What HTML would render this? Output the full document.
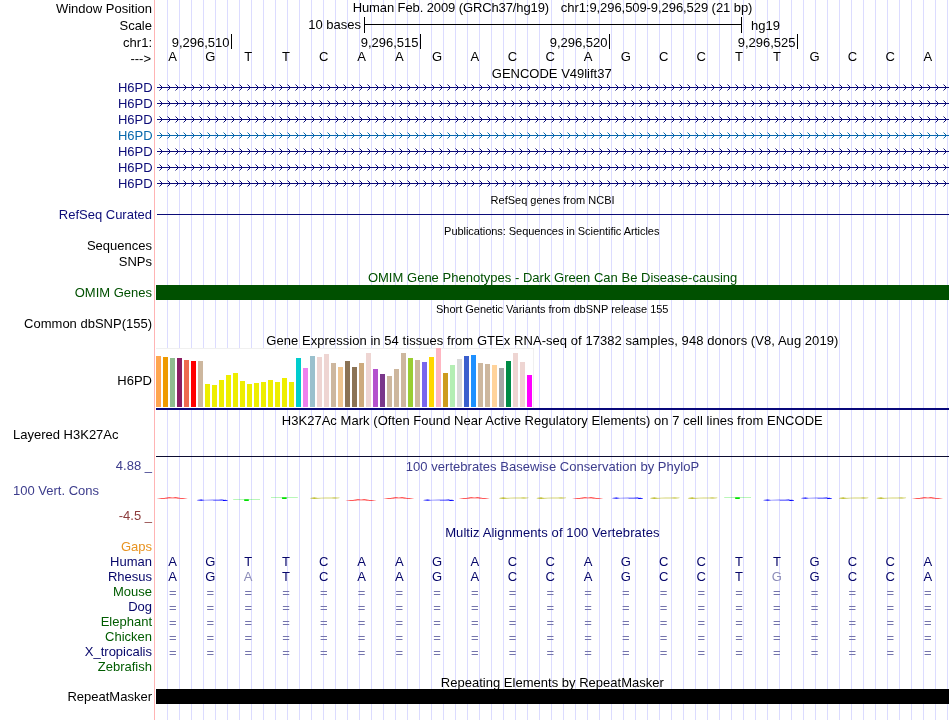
<!DOCTYPE html><html><head><meta charset="utf-8"><title>UCSC Genome Browser</title><style>
html,body{margin:0;padding:0;background:#fff;}
body{width:950px;height:720px;overflow:hidden;}
svg{display:block;font-family:"Liberation Sans",sans-serif;will-change:transform;}
text{font-size:13px;}
.r{text-anchor:end}.c{text-anchor:middle}.s{font-size:11px}
.g{shape-rendering:crispEdges}
</style></head><body>
<svg width="950" height="720" viewBox="0 0 950 720">
<rect width="950" height="720" fill="#fff"/>
<g class="g" fill="#dcdcff">
<rect x="167" y="0" width="1" height="720"/>
<rect x="179" y="0" width="1" height="720"/>
<rect x="191" y="0" width="1" height="720"/>
<rect x="203" y="0" width="1" height="720"/>
<rect x="215" y="0" width="1" height="720"/>
<rect x="227" y="0" width="1" height="720"/>
<rect x="239" y="0" width="1" height="720"/>
<rect x="251" y="0" width="1" height="720"/>
<rect x="263" y="0" width="1" height="720"/>
<rect x="275" y="0" width="1" height="720"/>
<rect x="287" y="0" width="1" height="720"/>
<rect x="299" y="0" width="1" height="720"/>
<rect x="311" y="0" width="1" height="720"/>
<rect x="323" y="0" width="1" height="720"/>
<rect x="335" y="0" width="1" height="720"/>
<rect x="347" y="0" width="1" height="720"/>
<rect x="359" y="0" width="1" height="720"/>
<rect x="371" y="0" width="1" height="720"/>
<rect x="383" y="0" width="1" height="720"/>
<rect x="395" y="0" width="1" height="720"/>
<rect x="407" y="0" width="1" height="720"/>
<rect x="419" y="0" width="1" height="720"/>
<rect x="431" y="0" width="1" height="720"/>
<rect x="443" y="0" width="1" height="720"/>
<rect x="455" y="0" width="1" height="720"/>
<rect x="467" y="0" width="1" height="720"/>
<rect x="479" y="0" width="1" height="720"/>
<rect x="491" y="0" width="1" height="720"/>
<rect x="503" y="0" width="1" height="720"/>
<rect x="515" y="0" width="1" height="720"/>
<rect x="527" y="0" width="1" height="720"/>
<rect x="539" y="0" width="1" height="720"/>
<rect x="551" y="0" width="1" height="720"/>
<rect x="563" y="0" width="1" height="720"/>
<rect x="575" y="0" width="1" height="720"/>
<rect x="587" y="0" width="1" height="720"/>
<rect x="599" y="0" width="1" height="720"/>
<rect x="611" y="0" width="1" height="720"/>
<rect x="623" y="0" width="1" height="720"/>
<rect x="635" y="0" width="1" height="720"/>
<rect x="647" y="0" width="1" height="720"/>
<rect x="659" y="0" width="1" height="720"/>
<rect x="671" y="0" width="1" height="720"/>
<rect x="683" y="0" width="1" height="720"/>
<rect x="695" y="0" width="1" height="720"/>
<rect x="707" y="0" width="1" height="720"/>
<rect x="719" y="0" width="1" height="720"/>
<rect x="731" y="0" width="1" height="720"/>
<rect x="743" y="0" width="1" height="720"/>
<rect x="755" y="0" width="1" height="720"/>
<rect x="767" y="0" width="1" height="720"/>
<rect x="779" y="0" width="1" height="720"/>
<rect x="791" y="0" width="1" height="720"/>
<rect x="803" y="0" width="1" height="720"/>
<rect x="815" y="0" width="1" height="720"/>
<rect x="827" y="0" width="1" height="720"/>
<rect x="839" y="0" width="1" height="720"/>
<rect x="851" y="0" width="1" height="720"/>
<rect x="863" y="0" width="1" height="720"/>
<rect x="875" y="0" width="1" height="720"/>
<rect x="887" y="0" width="1" height="720"/>
<rect x="899" y="0" width="1" height="720"/>
<rect x="911" y="0" width="1" height="720"/>
<rect x="923" y="0" width="1" height="720"/>
<rect x="935" y="0" width="1" height="720"/>
<rect x="947" y="0" width="1" height="720"/>
</g>
<rect class="g" x="154" y="0" width="1" height="720" fill="#ffb4b4"/>
<text class="r" x="152" y="13">Window Position</text>
<text class="r" x="152" y="30">Scale</text>
<text class="r" x="152" y="47">chr1:</text>
<text class="r" x="151" y="63">---&gt;</text>
<text x="352.73" y="12" textLength="196.37" lengthAdjust="spacing">Human Feb. 2009 (GRCh37/hg19)</text>
<text x="560.85" y="12" textLength="191.56" lengthAdjust="spacing">chr1:9,296,509-9,296,529 (21 bp)</text>
<text class="r" x="361" y="29">10 bases</text>
<g class="g" fill="#000"><rect x="364" y="24" width="378" height="1"/><rect x="364" y="17" width="1" height="16"/><rect x="741" y="17" width="1" height="16"/></g>
<text x="751" y="30">hg19</text>
<rect class="g" x="231" y="34" width="1" height="15"/>
<text class="r" x="229.5" y="47">9,296,510</text>
<rect class="g" x="420" y="34" width="1" height="15"/>
<text class="r" x="418.5" y="47">9,296,515</text>
<rect class="g" x="609" y="34" width="1" height="15"/>
<text class="r" x="607.5" y="47">9,296,520</text>
<rect class="g" x="797" y="34" width="1" height="15"/>
<text class="r" x="795.5" y="47">9,296,525</text>
<text class="c" x="172.7" y="61">A</text>
<text class="c" x="210.4" y="61">G</text>
<text class="c" x="248.2" y="61">T</text>
<text class="c" x="286.0" y="61">T</text>
<text class="c" x="323.7" y="61">C</text>
<text class="c" x="361.5" y="61">A</text>
<text class="c" x="399.3" y="61">A</text>
<text class="c" x="437.0" y="61">G</text>
<text class="c" x="474.8" y="61">A</text>
<text class="c" x="512.5" y="61">C</text>
<text class="c" x="550.3" y="61">C</text>
<text class="c" x="588.1" y="61">A</text>
<text class="c" x="625.8" y="61">G</text>
<text class="c" x="663.6" y="61">C</text>
<text class="c" x="701.3" y="61">C</text>
<text class="c" x="739.1" y="61">T</text>
<text class="c" x="776.9" y="61">T</text>
<text class="c" x="814.6" y="61">G</text>
<text class="c" x="852.4" y="61">C</text>
<text class="c" x="890.2" y="61">C</text>
<text class="c" x="927.9" y="61">A</text>
<text x="491.85" y="78" textLength="119.81" lengthAdjust="spacing">GENCODE V49lift37</text>
<text class="r" x="152.6" y="92" fill="#0c0c78">H6PD</text>
<g stroke="#0c0c78" fill="none" stroke-width="1">
<path class="g" d="M157 87.5H949"/>
<path d="M159.5 84.5l3 3l-3 3M167.5 84.5l3 3l-3 3M175.5 84.5l3 3l-3 3M183.5 84.5l3 3l-3 3M191.5 84.5l3 3l-3 3M199.5 84.5l3 3l-3 3M207.5 84.5l3 3l-3 3M215.5 84.5l3 3l-3 3M223.5 84.5l3 3l-3 3M231.5 84.5l3 3l-3 3M239.5 84.5l3 3l-3 3M247.5 84.5l3 3l-3 3M255.5 84.5l3 3l-3 3M263.5 84.5l3 3l-3 3M271.5 84.5l3 3l-3 3M279.5 84.5l3 3l-3 3M287.5 84.5l3 3l-3 3M295.5 84.5l3 3l-3 3M303.5 84.5l3 3l-3 3M311.5 84.5l3 3l-3 3M319.5 84.5l3 3l-3 3M327.5 84.5l3 3l-3 3M335.5 84.5l3 3l-3 3M343.5 84.5l3 3l-3 3M351.5 84.5l3 3l-3 3M359.5 84.5l3 3l-3 3M367.5 84.5l3 3l-3 3M375.5 84.5l3 3l-3 3M383.5 84.5l3 3l-3 3M391.5 84.5l3 3l-3 3M399.5 84.5l3 3l-3 3M407.5 84.5l3 3l-3 3M415.5 84.5l3 3l-3 3M423.5 84.5l3 3l-3 3M431.5 84.5l3 3l-3 3M439.5 84.5l3 3l-3 3M447.5 84.5l3 3l-3 3M455.5 84.5l3 3l-3 3M463.5 84.5l3 3l-3 3M471.5 84.5l3 3l-3 3M479.5 84.5l3 3l-3 3M487.5 84.5l3 3l-3 3M495.5 84.5l3 3l-3 3M503.5 84.5l3 3l-3 3M511.5 84.5l3 3l-3 3M519.5 84.5l3 3l-3 3M527.5 84.5l3 3l-3 3M535.5 84.5l3 3l-3 3M543.5 84.5l3 3l-3 3M551.5 84.5l3 3l-3 3M559.5 84.5l3 3l-3 3M567.5 84.5l3 3l-3 3M575.5 84.5l3 3l-3 3M583.5 84.5l3 3l-3 3M591.5 84.5l3 3l-3 3M599.5 84.5l3 3l-3 3M607.5 84.5l3 3l-3 3M615.5 84.5l3 3l-3 3M623.5 84.5l3 3l-3 3M631.5 84.5l3 3l-3 3M639.5 84.5l3 3l-3 3M647.5 84.5l3 3l-3 3M655.5 84.5l3 3l-3 3M663.5 84.5l3 3l-3 3M671.5 84.5l3 3l-3 3M679.5 84.5l3 3l-3 3M687.5 84.5l3 3l-3 3M695.5 84.5l3 3l-3 3M703.5 84.5l3 3l-3 3M711.5 84.5l3 3l-3 3M719.5 84.5l3 3l-3 3M727.5 84.5l3 3l-3 3M735.5 84.5l3 3l-3 3M743.5 84.5l3 3l-3 3M751.5 84.5l3 3l-3 3M759.5 84.5l3 3l-3 3M767.5 84.5l3 3l-3 3M775.5 84.5l3 3l-3 3M783.5 84.5l3 3l-3 3M791.5 84.5l3 3l-3 3M799.5 84.5l3 3l-3 3M807.5 84.5l3 3l-3 3M815.5 84.5l3 3l-3 3M823.5 84.5l3 3l-3 3M831.5 84.5l3 3l-3 3M839.5 84.5l3 3l-3 3M847.5 84.5l3 3l-3 3M855.5 84.5l3 3l-3 3M863.5 84.5l3 3l-3 3M871.5 84.5l3 3l-3 3M879.5 84.5l3 3l-3 3M887.5 84.5l3 3l-3 3M895.5 84.5l3 3l-3 3M903.5 84.5l3 3l-3 3M911.5 84.5l3 3l-3 3M919.5 84.5l3 3l-3 3M927.5 84.5l3 3l-3 3M935.5 84.5l3 3l-3 3M943.5 84.5l3 3l-3 3"/>
</g>
<text class="r" x="152.6" y="108" fill="#0c0c78">H6PD</text>
<g stroke="#0c0c78" fill="none" stroke-width="1">
<path class="g" d="M157 103.5H949"/>
<path d="M159.5 100.5l3 3l-3 3M167.5 100.5l3 3l-3 3M175.5 100.5l3 3l-3 3M183.5 100.5l3 3l-3 3M191.5 100.5l3 3l-3 3M199.5 100.5l3 3l-3 3M207.5 100.5l3 3l-3 3M215.5 100.5l3 3l-3 3M223.5 100.5l3 3l-3 3M231.5 100.5l3 3l-3 3M239.5 100.5l3 3l-3 3M247.5 100.5l3 3l-3 3M255.5 100.5l3 3l-3 3M263.5 100.5l3 3l-3 3M271.5 100.5l3 3l-3 3M279.5 100.5l3 3l-3 3M287.5 100.5l3 3l-3 3M295.5 100.5l3 3l-3 3M303.5 100.5l3 3l-3 3M311.5 100.5l3 3l-3 3M319.5 100.5l3 3l-3 3M327.5 100.5l3 3l-3 3M335.5 100.5l3 3l-3 3M343.5 100.5l3 3l-3 3M351.5 100.5l3 3l-3 3M359.5 100.5l3 3l-3 3M367.5 100.5l3 3l-3 3M375.5 100.5l3 3l-3 3M383.5 100.5l3 3l-3 3M391.5 100.5l3 3l-3 3M399.5 100.5l3 3l-3 3M407.5 100.5l3 3l-3 3M415.5 100.5l3 3l-3 3M423.5 100.5l3 3l-3 3M431.5 100.5l3 3l-3 3M439.5 100.5l3 3l-3 3M447.5 100.5l3 3l-3 3M455.5 100.5l3 3l-3 3M463.5 100.5l3 3l-3 3M471.5 100.5l3 3l-3 3M479.5 100.5l3 3l-3 3M487.5 100.5l3 3l-3 3M495.5 100.5l3 3l-3 3M503.5 100.5l3 3l-3 3M511.5 100.5l3 3l-3 3M519.5 100.5l3 3l-3 3M527.5 100.5l3 3l-3 3M535.5 100.5l3 3l-3 3M543.5 100.5l3 3l-3 3M551.5 100.5l3 3l-3 3M559.5 100.5l3 3l-3 3M567.5 100.5l3 3l-3 3M575.5 100.5l3 3l-3 3M583.5 100.5l3 3l-3 3M591.5 100.5l3 3l-3 3M599.5 100.5l3 3l-3 3M607.5 100.5l3 3l-3 3M615.5 100.5l3 3l-3 3M623.5 100.5l3 3l-3 3M631.5 100.5l3 3l-3 3M639.5 100.5l3 3l-3 3M647.5 100.5l3 3l-3 3M655.5 100.5l3 3l-3 3M663.5 100.5l3 3l-3 3M671.5 100.5l3 3l-3 3M679.5 100.5l3 3l-3 3M687.5 100.5l3 3l-3 3M695.5 100.5l3 3l-3 3M703.5 100.5l3 3l-3 3M711.5 100.5l3 3l-3 3M719.5 100.5l3 3l-3 3M727.5 100.5l3 3l-3 3M735.5 100.5l3 3l-3 3M743.5 100.5l3 3l-3 3M751.5 100.5l3 3l-3 3M759.5 100.5l3 3l-3 3M767.5 100.5l3 3l-3 3M775.5 100.5l3 3l-3 3M783.5 100.5l3 3l-3 3M791.5 100.5l3 3l-3 3M799.5 100.5l3 3l-3 3M807.5 100.5l3 3l-3 3M815.5 100.5l3 3l-3 3M823.5 100.5l3 3l-3 3M831.5 100.5l3 3l-3 3M839.5 100.5l3 3l-3 3M847.5 100.5l3 3l-3 3M855.5 100.5l3 3l-3 3M863.5 100.5l3 3l-3 3M871.5 100.5l3 3l-3 3M879.5 100.5l3 3l-3 3M887.5 100.5l3 3l-3 3M895.5 100.5l3 3l-3 3M903.5 100.5l3 3l-3 3M911.5 100.5l3 3l-3 3M919.5 100.5l3 3l-3 3M927.5 100.5l3 3l-3 3M935.5 100.5l3 3l-3 3M943.5 100.5l3 3l-3 3"/>
</g>
<text class="r" x="152.6" y="124" fill="#0c0c78">H6PD</text>
<g stroke="#0c0c78" fill="none" stroke-width="1">
<path class="g" d="M157 119.5H949"/>
<path d="M159.5 116.5l3 3l-3 3M167.5 116.5l3 3l-3 3M175.5 116.5l3 3l-3 3M183.5 116.5l3 3l-3 3M191.5 116.5l3 3l-3 3M199.5 116.5l3 3l-3 3M207.5 116.5l3 3l-3 3M215.5 116.5l3 3l-3 3M223.5 116.5l3 3l-3 3M231.5 116.5l3 3l-3 3M239.5 116.5l3 3l-3 3M247.5 116.5l3 3l-3 3M255.5 116.5l3 3l-3 3M263.5 116.5l3 3l-3 3M271.5 116.5l3 3l-3 3M279.5 116.5l3 3l-3 3M287.5 116.5l3 3l-3 3M295.5 116.5l3 3l-3 3M303.5 116.5l3 3l-3 3M311.5 116.5l3 3l-3 3M319.5 116.5l3 3l-3 3M327.5 116.5l3 3l-3 3M335.5 116.5l3 3l-3 3M343.5 116.5l3 3l-3 3M351.5 116.5l3 3l-3 3M359.5 116.5l3 3l-3 3M367.5 116.5l3 3l-3 3M375.5 116.5l3 3l-3 3M383.5 116.5l3 3l-3 3M391.5 116.5l3 3l-3 3M399.5 116.5l3 3l-3 3M407.5 116.5l3 3l-3 3M415.5 116.5l3 3l-3 3M423.5 116.5l3 3l-3 3M431.5 116.5l3 3l-3 3M439.5 116.5l3 3l-3 3M447.5 116.5l3 3l-3 3M455.5 116.5l3 3l-3 3M463.5 116.5l3 3l-3 3M471.5 116.5l3 3l-3 3M479.5 116.5l3 3l-3 3M487.5 116.5l3 3l-3 3M495.5 116.5l3 3l-3 3M503.5 116.5l3 3l-3 3M511.5 116.5l3 3l-3 3M519.5 116.5l3 3l-3 3M527.5 116.5l3 3l-3 3M535.5 116.5l3 3l-3 3M543.5 116.5l3 3l-3 3M551.5 116.5l3 3l-3 3M559.5 116.5l3 3l-3 3M567.5 116.5l3 3l-3 3M575.5 116.5l3 3l-3 3M583.5 116.5l3 3l-3 3M591.5 116.5l3 3l-3 3M599.5 116.5l3 3l-3 3M607.5 116.5l3 3l-3 3M615.5 116.5l3 3l-3 3M623.5 116.5l3 3l-3 3M631.5 116.5l3 3l-3 3M639.5 116.5l3 3l-3 3M647.5 116.5l3 3l-3 3M655.5 116.5l3 3l-3 3M663.5 116.5l3 3l-3 3M671.5 116.5l3 3l-3 3M679.5 116.5l3 3l-3 3M687.5 116.5l3 3l-3 3M695.5 116.5l3 3l-3 3M703.5 116.5l3 3l-3 3M711.5 116.5l3 3l-3 3M719.5 116.5l3 3l-3 3M727.5 116.5l3 3l-3 3M735.5 116.5l3 3l-3 3M743.5 116.5l3 3l-3 3M751.5 116.5l3 3l-3 3M759.5 116.5l3 3l-3 3M767.5 116.5l3 3l-3 3M775.5 116.5l3 3l-3 3M783.5 116.5l3 3l-3 3M791.5 116.5l3 3l-3 3M799.5 116.5l3 3l-3 3M807.5 116.5l3 3l-3 3M815.5 116.5l3 3l-3 3M823.5 116.5l3 3l-3 3M831.5 116.5l3 3l-3 3M839.5 116.5l3 3l-3 3M847.5 116.5l3 3l-3 3M855.5 116.5l3 3l-3 3M863.5 116.5l3 3l-3 3M871.5 116.5l3 3l-3 3M879.5 116.5l3 3l-3 3M887.5 116.5l3 3l-3 3M895.5 116.5l3 3l-3 3M903.5 116.5l3 3l-3 3M911.5 116.5l3 3l-3 3M919.5 116.5l3 3l-3 3M927.5 116.5l3 3l-3 3M935.5 116.5l3 3l-3 3M943.5 116.5l3 3l-3 3"/>
</g>
<text class="r" x="152.6" y="140" fill="#0868ac">H6PD</text>
<g stroke="#0868ac" fill="none" stroke-width="1">
<path class="g" d="M157 135.5H949"/>
<path d="M159.5 132.5l3 3l-3 3M167.5 132.5l3 3l-3 3M175.5 132.5l3 3l-3 3M183.5 132.5l3 3l-3 3M191.5 132.5l3 3l-3 3M199.5 132.5l3 3l-3 3M207.5 132.5l3 3l-3 3M215.5 132.5l3 3l-3 3M223.5 132.5l3 3l-3 3M231.5 132.5l3 3l-3 3M239.5 132.5l3 3l-3 3M247.5 132.5l3 3l-3 3M255.5 132.5l3 3l-3 3M263.5 132.5l3 3l-3 3M271.5 132.5l3 3l-3 3M279.5 132.5l3 3l-3 3M287.5 132.5l3 3l-3 3M295.5 132.5l3 3l-3 3M303.5 132.5l3 3l-3 3M311.5 132.5l3 3l-3 3M319.5 132.5l3 3l-3 3M327.5 132.5l3 3l-3 3M335.5 132.5l3 3l-3 3M343.5 132.5l3 3l-3 3M351.5 132.5l3 3l-3 3M359.5 132.5l3 3l-3 3M367.5 132.5l3 3l-3 3M375.5 132.5l3 3l-3 3M383.5 132.5l3 3l-3 3M391.5 132.5l3 3l-3 3M399.5 132.5l3 3l-3 3M407.5 132.5l3 3l-3 3M415.5 132.5l3 3l-3 3M423.5 132.5l3 3l-3 3M431.5 132.5l3 3l-3 3M439.5 132.5l3 3l-3 3M447.5 132.5l3 3l-3 3M455.5 132.5l3 3l-3 3M463.5 132.5l3 3l-3 3M471.5 132.5l3 3l-3 3M479.5 132.5l3 3l-3 3M487.5 132.5l3 3l-3 3M495.5 132.5l3 3l-3 3M503.5 132.5l3 3l-3 3M511.5 132.5l3 3l-3 3M519.5 132.5l3 3l-3 3M527.5 132.5l3 3l-3 3M535.5 132.5l3 3l-3 3M543.5 132.5l3 3l-3 3M551.5 132.5l3 3l-3 3M559.5 132.5l3 3l-3 3M567.5 132.5l3 3l-3 3M575.5 132.5l3 3l-3 3M583.5 132.5l3 3l-3 3M591.5 132.5l3 3l-3 3M599.5 132.5l3 3l-3 3M607.5 132.5l3 3l-3 3M615.5 132.5l3 3l-3 3M623.5 132.5l3 3l-3 3M631.5 132.5l3 3l-3 3M639.5 132.5l3 3l-3 3M647.5 132.5l3 3l-3 3M655.5 132.5l3 3l-3 3M663.5 132.5l3 3l-3 3M671.5 132.5l3 3l-3 3M679.5 132.5l3 3l-3 3M687.5 132.5l3 3l-3 3M695.5 132.5l3 3l-3 3M703.5 132.5l3 3l-3 3M711.5 132.5l3 3l-3 3M719.5 132.5l3 3l-3 3M727.5 132.5l3 3l-3 3M735.5 132.5l3 3l-3 3M743.5 132.5l3 3l-3 3M751.5 132.5l3 3l-3 3M759.5 132.5l3 3l-3 3M767.5 132.5l3 3l-3 3M775.5 132.5l3 3l-3 3M783.5 132.5l3 3l-3 3M791.5 132.5l3 3l-3 3M799.5 132.5l3 3l-3 3M807.5 132.5l3 3l-3 3M815.5 132.5l3 3l-3 3M823.5 132.5l3 3l-3 3M831.5 132.5l3 3l-3 3M839.5 132.5l3 3l-3 3M847.5 132.5l3 3l-3 3M855.5 132.5l3 3l-3 3M863.5 132.5l3 3l-3 3M871.5 132.5l3 3l-3 3M879.5 132.5l3 3l-3 3M887.5 132.5l3 3l-3 3M895.5 132.5l3 3l-3 3M903.5 132.5l3 3l-3 3M911.5 132.5l3 3l-3 3M919.5 132.5l3 3l-3 3M927.5 132.5l3 3l-3 3M935.5 132.5l3 3l-3 3M943.5 132.5l3 3l-3 3"/>
</g>
<text class="r" x="152.6" y="156" fill="#0c0c78">H6PD</text>
<g stroke="#0c0c78" fill="none" stroke-width="1">
<path class="g" d="M157 151.5H949"/>
<path d="M159.5 148.5l3 3l-3 3M167.5 148.5l3 3l-3 3M175.5 148.5l3 3l-3 3M183.5 148.5l3 3l-3 3M191.5 148.5l3 3l-3 3M199.5 148.5l3 3l-3 3M207.5 148.5l3 3l-3 3M215.5 148.5l3 3l-3 3M223.5 148.5l3 3l-3 3M231.5 148.5l3 3l-3 3M239.5 148.5l3 3l-3 3M247.5 148.5l3 3l-3 3M255.5 148.5l3 3l-3 3M263.5 148.5l3 3l-3 3M271.5 148.5l3 3l-3 3M279.5 148.5l3 3l-3 3M287.5 148.5l3 3l-3 3M295.5 148.5l3 3l-3 3M303.5 148.5l3 3l-3 3M311.5 148.5l3 3l-3 3M319.5 148.5l3 3l-3 3M327.5 148.5l3 3l-3 3M335.5 148.5l3 3l-3 3M343.5 148.5l3 3l-3 3M351.5 148.5l3 3l-3 3M359.5 148.5l3 3l-3 3M367.5 148.5l3 3l-3 3M375.5 148.5l3 3l-3 3M383.5 148.5l3 3l-3 3M391.5 148.5l3 3l-3 3M399.5 148.5l3 3l-3 3M407.5 148.5l3 3l-3 3M415.5 148.5l3 3l-3 3M423.5 148.5l3 3l-3 3M431.5 148.5l3 3l-3 3M439.5 148.5l3 3l-3 3M447.5 148.5l3 3l-3 3M455.5 148.5l3 3l-3 3M463.5 148.5l3 3l-3 3M471.5 148.5l3 3l-3 3M479.5 148.5l3 3l-3 3M487.5 148.5l3 3l-3 3M495.5 148.5l3 3l-3 3M503.5 148.5l3 3l-3 3M511.5 148.5l3 3l-3 3M519.5 148.5l3 3l-3 3M527.5 148.5l3 3l-3 3M535.5 148.5l3 3l-3 3M543.5 148.5l3 3l-3 3M551.5 148.5l3 3l-3 3M559.5 148.5l3 3l-3 3M567.5 148.5l3 3l-3 3M575.5 148.5l3 3l-3 3M583.5 148.5l3 3l-3 3M591.5 148.5l3 3l-3 3M599.5 148.5l3 3l-3 3M607.5 148.5l3 3l-3 3M615.5 148.5l3 3l-3 3M623.5 148.5l3 3l-3 3M631.5 148.5l3 3l-3 3M639.5 148.5l3 3l-3 3M647.5 148.5l3 3l-3 3M655.5 148.5l3 3l-3 3M663.5 148.5l3 3l-3 3M671.5 148.5l3 3l-3 3M679.5 148.5l3 3l-3 3M687.5 148.5l3 3l-3 3M695.5 148.5l3 3l-3 3M703.5 148.5l3 3l-3 3M711.5 148.5l3 3l-3 3M719.5 148.5l3 3l-3 3M727.5 148.5l3 3l-3 3M735.5 148.5l3 3l-3 3M743.5 148.5l3 3l-3 3M751.5 148.5l3 3l-3 3M759.5 148.5l3 3l-3 3M767.5 148.5l3 3l-3 3M775.5 148.5l3 3l-3 3M783.5 148.5l3 3l-3 3M791.5 148.5l3 3l-3 3M799.5 148.5l3 3l-3 3M807.5 148.5l3 3l-3 3M815.5 148.5l3 3l-3 3M823.5 148.5l3 3l-3 3M831.5 148.5l3 3l-3 3M839.5 148.5l3 3l-3 3M847.5 148.5l3 3l-3 3M855.5 148.5l3 3l-3 3M863.5 148.5l3 3l-3 3M871.5 148.5l3 3l-3 3M879.5 148.5l3 3l-3 3M887.5 148.5l3 3l-3 3M895.5 148.5l3 3l-3 3M903.5 148.5l3 3l-3 3M911.5 148.5l3 3l-3 3M919.5 148.5l3 3l-3 3M927.5 148.5l3 3l-3 3M935.5 148.5l3 3l-3 3M943.5 148.5l3 3l-3 3"/>
</g>
<text class="r" x="152.6" y="172" fill="#0c0c78">H6PD</text>
<g stroke="#0c0c78" fill="none" stroke-width="1">
<path class="g" d="M157 167.5H949"/>
<path d="M159.5 164.5l3 3l-3 3M167.5 164.5l3 3l-3 3M175.5 164.5l3 3l-3 3M183.5 164.5l3 3l-3 3M191.5 164.5l3 3l-3 3M199.5 164.5l3 3l-3 3M207.5 164.5l3 3l-3 3M215.5 164.5l3 3l-3 3M223.5 164.5l3 3l-3 3M231.5 164.5l3 3l-3 3M239.5 164.5l3 3l-3 3M247.5 164.5l3 3l-3 3M255.5 164.5l3 3l-3 3M263.5 164.5l3 3l-3 3M271.5 164.5l3 3l-3 3M279.5 164.5l3 3l-3 3M287.5 164.5l3 3l-3 3M295.5 164.5l3 3l-3 3M303.5 164.5l3 3l-3 3M311.5 164.5l3 3l-3 3M319.5 164.5l3 3l-3 3M327.5 164.5l3 3l-3 3M335.5 164.5l3 3l-3 3M343.5 164.5l3 3l-3 3M351.5 164.5l3 3l-3 3M359.5 164.5l3 3l-3 3M367.5 164.5l3 3l-3 3M375.5 164.5l3 3l-3 3M383.5 164.5l3 3l-3 3M391.5 164.5l3 3l-3 3M399.5 164.5l3 3l-3 3M407.5 164.5l3 3l-3 3M415.5 164.5l3 3l-3 3M423.5 164.5l3 3l-3 3M431.5 164.5l3 3l-3 3M439.5 164.5l3 3l-3 3M447.5 164.5l3 3l-3 3M455.5 164.5l3 3l-3 3M463.5 164.5l3 3l-3 3M471.5 164.5l3 3l-3 3M479.5 164.5l3 3l-3 3M487.5 164.5l3 3l-3 3M495.5 164.5l3 3l-3 3M503.5 164.5l3 3l-3 3M511.5 164.5l3 3l-3 3M519.5 164.5l3 3l-3 3M527.5 164.5l3 3l-3 3M535.5 164.5l3 3l-3 3M543.5 164.5l3 3l-3 3M551.5 164.5l3 3l-3 3M559.5 164.5l3 3l-3 3M567.5 164.5l3 3l-3 3M575.5 164.5l3 3l-3 3M583.5 164.5l3 3l-3 3M591.5 164.5l3 3l-3 3M599.5 164.5l3 3l-3 3M607.5 164.5l3 3l-3 3M615.5 164.5l3 3l-3 3M623.5 164.5l3 3l-3 3M631.5 164.5l3 3l-3 3M639.5 164.5l3 3l-3 3M647.5 164.5l3 3l-3 3M655.5 164.5l3 3l-3 3M663.5 164.5l3 3l-3 3M671.5 164.5l3 3l-3 3M679.5 164.5l3 3l-3 3M687.5 164.5l3 3l-3 3M695.5 164.5l3 3l-3 3M703.5 164.5l3 3l-3 3M711.5 164.5l3 3l-3 3M719.5 164.5l3 3l-3 3M727.5 164.5l3 3l-3 3M735.5 164.5l3 3l-3 3M743.5 164.5l3 3l-3 3M751.5 164.5l3 3l-3 3M759.5 164.5l3 3l-3 3M767.5 164.5l3 3l-3 3M775.5 164.5l3 3l-3 3M783.5 164.5l3 3l-3 3M791.5 164.5l3 3l-3 3M799.5 164.5l3 3l-3 3M807.5 164.5l3 3l-3 3M815.5 164.5l3 3l-3 3M823.5 164.5l3 3l-3 3M831.5 164.5l3 3l-3 3M839.5 164.5l3 3l-3 3M847.5 164.5l3 3l-3 3M855.5 164.5l3 3l-3 3M863.5 164.5l3 3l-3 3M871.5 164.5l3 3l-3 3M879.5 164.5l3 3l-3 3M887.5 164.5l3 3l-3 3M895.5 164.5l3 3l-3 3M903.5 164.5l3 3l-3 3M911.5 164.5l3 3l-3 3M919.5 164.5l3 3l-3 3M927.5 164.5l3 3l-3 3M935.5 164.5l3 3l-3 3M943.5 164.5l3 3l-3 3"/>
</g>
<text class="r" x="152.6" y="188" fill="#0c0c78">H6PD</text>
<g stroke="#0c0c78" fill="none" stroke-width="1">
<path class="g" d="M157 183.5H949"/>
<path d="M159.5 180.5l3 3l-3 3M167.5 180.5l3 3l-3 3M175.5 180.5l3 3l-3 3M183.5 180.5l3 3l-3 3M191.5 180.5l3 3l-3 3M199.5 180.5l3 3l-3 3M207.5 180.5l3 3l-3 3M215.5 180.5l3 3l-3 3M223.5 180.5l3 3l-3 3M231.5 180.5l3 3l-3 3M239.5 180.5l3 3l-3 3M247.5 180.5l3 3l-3 3M255.5 180.5l3 3l-3 3M263.5 180.5l3 3l-3 3M271.5 180.5l3 3l-3 3M279.5 180.5l3 3l-3 3M287.5 180.5l3 3l-3 3M295.5 180.5l3 3l-3 3M303.5 180.5l3 3l-3 3M311.5 180.5l3 3l-3 3M319.5 180.5l3 3l-3 3M327.5 180.5l3 3l-3 3M335.5 180.5l3 3l-3 3M343.5 180.5l3 3l-3 3M351.5 180.5l3 3l-3 3M359.5 180.5l3 3l-3 3M367.5 180.5l3 3l-3 3M375.5 180.5l3 3l-3 3M383.5 180.5l3 3l-3 3M391.5 180.5l3 3l-3 3M399.5 180.5l3 3l-3 3M407.5 180.5l3 3l-3 3M415.5 180.5l3 3l-3 3M423.5 180.5l3 3l-3 3M431.5 180.5l3 3l-3 3M439.5 180.5l3 3l-3 3M447.5 180.5l3 3l-3 3M455.5 180.5l3 3l-3 3M463.5 180.5l3 3l-3 3M471.5 180.5l3 3l-3 3M479.5 180.5l3 3l-3 3M487.5 180.5l3 3l-3 3M495.5 180.5l3 3l-3 3M503.5 180.5l3 3l-3 3M511.5 180.5l3 3l-3 3M519.5 180.5l3 3l-3 3M527.5 180.5l3 3l-3 3M535.5 180.5l3 3l-3 3M543.5 180.5l3 3l-3 3M551.5 180.5l3 3l-3 3M559.5 180.5l3 3l-3 3M567.5 180.5l3 3l-3 3M575.5 180.5l3 3l-3 3M583.5 180.5l3 3l-3 3M591.5 180.5l3 3l-3 3M599.5 180.5l3 3l-3 3M607.5 180.5l3 3l-3 3M615.5 180.5l3 3l-3 3M623.5 180.5l3 3l-3 3M631.5 180.5l3 3l-3 3M639.5 180.5l3 3l-3 3M647.5 180.5l3 3l-3 3M655.5 180.5l3 3l-3 3M663.5 180.5l3 3l-3 3M671.5 180.5l3 3l-3 3M679.5 180.5l3 3l-3 3M687.5 180.5l3 3l-3 3M695.5 180.5l3 3l-3 3M703.5 180.5l3 3l-3 3M711.5 180.5l3 3l-3 3M719.5 180.5l3 3l-3 3M727.5 180.5l3 3l-3 3M735.5 180.5l3 3l-3 3M743.5 180.5l3 3l-3 3M751.5 180.5l3 3l-3 3M759.5 180.5l3 3l-3 3M767.5 180.5l3 3l-3 3M775.5 180.5l3 3l-3 3M783.5 180.5l3 3l-3 3M791.5 180.5l3 3l-3 3M799.5 180.5l3 3l-3 3M807.5 180.5l3 3l-3 3M815.5 180.5l3 3l-3 3M823.5 180.5l3 3l-3 3M831.5 180.5l3 3l-3 3M839.5 180.5l3 3l-3 3M847.5 180.5l3 3l-3 3M855.5 180.5l3 3l-3 3M863.5 180.5l3 3l-3 3M871.5 180.5l3 3l-3 3M879.5 180.5l3 3l-3 3M887.5 180.5l3 3l-3 3M895.5 180.5l3 3l-3 3M903.5 180.5l3 3l-3 3M911.5 180.5l3 3l-3 3M919.5 180.5l3 3l-3 3M927.5 180.5l3 3l-3 3M935.5 180.5l3 3l-3 3M943.5 180.5l3 3l-3 3"/>
</g>
<text x="490.60" y="204" textLength="123.92" lengthAdjust="spacing" style="font-size:11px">RefSeq genes from NCBI</text>
<text class="r" x="152" y="219" fill="#0c0c78">RefSeq Curated</text>
<rect class="g" x="157" y="214" width="792" height="1" fill="#0c0c78"/>
<text x="444.10" y="235" textLength="215.30" lengthAdjust="spacing" style="font-size:11px">Publications: Sequences in Scientific Articles</text>
<text class="r" x="152" y="250">Sequences</text>
<text class="r" x="152" y="266">SNPs</text>
<text x="367.88" y="282" textLength="369.45" lengthAdjust="spacing" fill="#005000">OMIM Gene Phenotypes - Dark Green Can Be Disease-causing</text>
<text class="r" x="152" y="297" fill="#005000">OMIM Genes</text>
<rect class="g" x="156" y="285" width="793" height="15" fill="#005000"/>
<text x="436.00" y="313" textLength="232.46" lengthAdjust="spacing" style="font-size:11px">Short Genetic Variants from dbSNP release 155</text>
<text class="r" x="152" y="328">Common dbSNP(155)</text>
<text x="266.25" y="345" textLength="572.06" lengthAdjust="spacing">Gene Expression in 54 tissues from GTEx RNA-seq of 17382 samples, 948 donors (V8, Aug 2019)</text>
<text class="r" x="152" y="385">H6PD</text>
<g class="g">
<rect x="156" y="348" width="378" height="60" fill="#fff"/>
<rect x="156" y="348" width="378" height="1" fill="#f0f0f0"/><rect x="533" y="348" width="1" height="60" fill="#f0f0f0"/>
<rect x="156" y="356" width="5" height="51" fill="#FFA54F"/>
<rect x="163" y="357" width="5" height="50" fill="#EE9A00"/>
<rect x="170" y="358" width="5" height="49" fill="#8FBC8F"/>
<rect x="177" y="358" width="5" height="49" fill="#8B1C62"/>
<rect x="184" y="360" width="5" height="47" fill="#EE6A50"/>
<rect x="191" y="361" width="5" height="46" fill="#FF0000"/>
<rect x="198" y="361" width="5" height="46" fill="#CDB79E"/>
<rect x="205" y="384" width="5" height="23" fill="#EEEE00"/>
<rect x="212" y="385" width="5" height="22" fill="#EEEE00"/>
<rect x="219" y="380" width="5" height="27" fill="#EEEE00"/>
<rect x="226" y="375" width="5" height="32" fill="#EEEE00"/>
<rect x="233" y="373" width="5" height="34" fill="#EEEE00"/>
<rect x="240" y="381" width="5" height="26" fill="#EEEE00"/>
<rect x="247" y="384" width="5" height="23" fill="#EEEE00"/>
<rect x="254" y="383" width="5" height="24" fill="#EEEE00"/>
<rect x="261" y="382" width="5" height="25" fill="#EEEE00"/>
<rect x="268" y="380" width="5" height="27" fill="#EEEE00"/>
<rect x="275" y="382" width="5" height="25" fill="#EEEE00"/>
<rect x="282" y="378" width="5" height="29" fill="#EEEE00"/>
<rect x="289" y="382" width="5" height="25" fill="#EEEE00"/>
<rect x="296" y="358" width="5" height="49" fill="#00CDCD"/>
<rect x="303" y="368" width="5" height="39" fill="#EE82EE"/>
<rect x="310" y="356" width="5" height="51" fill="#9AC0CD"/>
<rect x="317" y="357" width="5" height="50" fill="#EED5D2"/>
<rect x="324" y="354" width="5" height="53" fill="#EED5D2"/>
<rect x="331" y="363" width="5" height="44" fill="#CDB79E"/>
<rect x="338" y="367" width="5" height="40" fill="#EEC591"/>
<rect x="345" y="361" width="5" height="46" fill="#8B7355"/>
<rect x="352" y="367" width="5" height="40" fill="#8B7355"/>
<rect x="359" y="363" width="5" height="44" fill="#CDAA7D"/>
<rect x="366" y="353" width="5" height="54" fill="#EED5D2"/>
<rect x="373" y="369" width="5" height="38" fill="#B452CD"/>
<rect x="380" y="374" width="5" height="33" fill="#7A378B"/>
<rect x="387" y="376" width="5" height="31" fill="#CDB79E"/>
<rect x="394" y="369" width="5" height="38" fill="#CDB79E"/>
<rect x="401" y="353" width="5" height="54" fill="#CDB79E"/>
<rect x="408" y="358" width="5" height="49" fill="#9ACD32"/>
<rect x="415" y="360" width="5" height="47" fill="#CDB79E"/>
<rect x="422" y="362" width="5" height="45" fill="#7A67EE"/>
<rect x="429" y="357" width="5" height="50" fill="#FFD700"/>
<rect x="436" y="348" width="5" height="59" fill="#FFB6C1"/>
<rect x="443" y="373" width="5" height="34" fill="#CD9B1D"/>
<rect x="450" y="365" width="5" height="42" fill="#B4EEB4"/>
<rect x="457" y="359" width="5" height="48" fill="#D9D9D9"/>
<rect x="464" y="356" width="5" height="51" fill="#3A5FCD"/>
<rect x="471" y="355" width="5" height="52" fill="#1E90FF"/>
<rect x="478" y="363" width="5" height="44" fill="#CDB79E"/>
<rect x="485" y="364" width="5" height="43" fill="#CDB79E"/>
<rect x="492" y="365" width="5" height="42" fill="#FFD39B"/>
<rect x="499" y="368" width="5" height="39" fill="#A6A6A6"/>
<rect x="506" y="361" width="5" height="46" fill="#008B45"/>
<rect x="513" y="353" width="5" height="54" fill="#EED5D2"/>
<rect x="520" y="362" width="5" height="45" fill="#EED5D2"/>
<rect x="527" y="375" width="5" height="32" fill="#FF00FF"/>
<rect x="156" y="408" width="793" height="2" fill="#08087a"/>
</g>
<text x="281.73" y="425" textLength="541.03" lengthAdjust="spacing">H3K27Ac Mark (Often Found Near Active Regulatory Elements) on 7 cell lines from ENCODE</text>
<text x="13" y="439">Layered H3K27Ac</text>
<rect class="g" x="156" y="456" width="793" height="1" fill="#0c0c30"/>
<text x="405.81" y="471" textLength="293.38" lengthAdjust="spacing" fill="#3c3c8c">100 vertebrates Basewise Conservation by PhyloP</text>
<text class="r" x="152" y="470" fill="#3c3c8c">4.88 _</text>
<text x="13" y="495" fill="#3c3c8c">100 Vert. Cons</text>
<text class="r" x="152" y="520" fill="#8c3c3c">-4.5 _</text>
<g id="logo" style="text-rendering:geometricPrecision">
<text transform="translate(157.0 499.00) scale(3.55 0.2)" x="0" y="0" fill="#ff0000" stroke="#ff0000" stroke-width="0.12" style="font-size:13px">A</text>
<text transform="translate(194.8 501.00) scale(3.55 0.2)" x="0" y="0" fill="#0000ff" stroke="#0000ff" stroke-width="0.12" style="font-size:13px">G</text>
<text transform="translate(232.5 501.00) scale(3.55 0.2)" x="0" y="0" fill="#00e000" stroke="#00e000" stroke-width="0.12" style="font-size:13px">T</text>
<text transform="translate(270.3 499.00) scale(3.55 0.2)" x="0" y="0" fill="#00e000" stroke="#00e000" stroke-width="0.12" style="font-size:13px">T</text>
<text transform="translate(308.0 499.00) scale(3.55 0.2)" x="0" y="0" fill="#b0b000" stroke="#b0b000" stroke-width="0.12" style="font-size:13px">C</text>
<text transform="translate(345.8 501.00) scale(3.55 0.2)" x="0" y="0" fill="#ff0000" stroke="#ff0000" stroke-width="0.12" style="font-size:13px">A</text>
<text transform="translate(383.6 499.00) scale(3.55 0.2)" x="0" y="0" fill="#ff0000" stroke="#ff0000" stroke-width="0.12" style="font-size:13px">A</text>
<text transform="translate(421.3 501.00) scale(3.55 0.2)" x="0" y="0" fill="#0000ff" stroke="#0000ff" stroke-width="0.12" style="font-size:13px">G</text>
<text transform="translate(459.1 499.00) scale(3.55 0.2)" x="0" y="0" fill="#ff0000" stroke="#ff0000" stroke-width="0.12" style="font-size:13px">A</text>
<text transform="translate(496.9 499.00) scale(3.55 0.2)" x="0" y="0" fill="#b0b000" stroke="#b0b000" stroke-width="0.12" style="font-size:13px">C</text>
<text transform="translate(534.6 499.00) scale(3.55 0.2)" x="0" y="0" fill="#b0b000" stroke="#b0b000" stroke-width="0.12" style="font-size:13px">C</text>
<text transform="translate(572.4 499.00) scale(3.55 0.2)" x="0" y="0" fill="#ff0000" stroke="#ff0000" stroke-width="0.12" style="font-size:13px">A</text>
<text transform="translate(610.1 499.00) scale(3.55 0.2)" x="0" y="0" fill="#0000ff" stroke="#0000ff" stroke-width="0.12" style="font-size:13px">G</text>
<text transform="translate(647.9 499.00) scale(3.55 0.2)" x="0" y="0" fill="#b0b000" stroke="#b0b000" stroke-width="0.12" style="font-size:13px">C</text>
<text transform="translate(685.7 499.00) scale(3.55 0.2)" x="0" y="0" fill="#b0b000" stroke="#b0b000" stroke-width="0.12" style="font-size:13px">C</text>
<text transform="translate(723.4 499.00) scale(3.55 0.2)" x="0" y="0" fill="#00e000" stroke="#00e000" stroke-width="0.12" style="font-size:13px">T</text>
<text transform="translate(761.2 501.00) scale(3.55 0.2)" x="0" y="0" fill="#0000ff" stroke="#0000ff" stroke-width="0.12" style="font-size:13px">G</text>
<text transform="translate(799.0 499.00) scale(3.55 0.2)" x="0" y="0" fill="#0000ff" stroke="#0000ff" stroke-width="0.12" style="font-size:13px">G</text>
<text transform="translate(836.7 499.00) scale(3.55 0.2)" x="0" y="0" fill="#b0b000" stroke="#b0b000" stroke-width="0.12" style="font-size:13px">C</text>
<text transform="translate(874.5 499.00) scale(3.55 0.2)" x="0" y="0" fill="#b0b000" stroke="#b0b000" stroke-width="0.12" style="font-size:13px">C</text>
<text transform="translate(912.2 499.00) scale(3.55 0.2)" x="0" y="0" fill="#ff0000" stroke="#ff0000" stroke-width="0.12" style="font-size:13px">A</text>
</g>
<text x="445.13" y="537" textLength="214.34" lengthAdjust="spacing" fill="#06066a">Multiz Alignments of 100 Vertebrates</text>
<text class="r" x="152" y="551" fill="#e89320">Gaps</text>
<text class="r" x="152" y="566" fill="#06066a">Human</text>
<text class="c" x="172.7" y="566" fill="#06066a">A</text>
<text class="c" x="210.4" y="566" fill="#06066a">G</text>
<text class="c" x="248.2" y="566" fill="#06066a">T</text>
<text class="c" x="286.0" y="566" fill="#06066a">T</text>
<text class="c" x="323.7" y="566" fill="#06066a">C</text>
<text class="c" x="361.5" y="566" fill="#06066a">A</text>
<text class="c" x="399.3" y="566" fill="#06066a">A</text>
<text class="c" x="437.0" y="566" fill="#06066a">G</text>
<text class="c" x="474.8" y="566" fill="#06066a">A</text>
<text class="c" x="512.5" y="566" fill="#06066a">C</text>
<text class="c" x="550.3" y="566" fill="#06066a">C</text>
<text class="c" x="588.1" y="566" fill="#06066a">A</text>
<text class="c" x="625.8" y="566" fill="#06066a">G</text>
<text class="c" x="663.6" y="566" fill="#06066a">C</text>
<text class="c" x="701.3" y="566" fill="#06066a">C</text>
<text class="c" x="739.1" y="566" fill="#06066a">T</text>
<text class="c" x="776.9" y="566" fill="#06066a">T</text>
<text class="c" x="814.6" y="566" fill="#06066a">G</text>
<text class="c" x="852.4" y="566" fill="#06066a">C</text>
<text class="c" x="890.2" y="566" fill="#06066a">C</text>
<text class="c" x="927.9" y="566" fill="#06066a">A</text>
<text class="r" x="152" y="581" fill="#06066a">Rhesus</text>
<text class="c" x="172.7" y="581" fill="#06066a">A</text>
<text class="c" x="210.4" y="581" fill="#06066a">G</text>
<text class="c" x="248.2" y="581" fill="#8c8cb8">A</text>
<text class="c" x="286.0" y="581" fill="#06066a">T</text>
<text class="c" x="323.7" y="581" fill="#06066a">C</text>
<text class="c" x="361.5" y="581" fill="#06066a">A</text>
<text class="c" x="399.3" y="581" fill="#06066a">A</text>
<text class="c" x="437.0" y="581" fill="#06066a">G</text>
<text class="c" x="474.8" y="581" fill="#06066a">A</text>
<text class="c" x="512.5" y="581" fill="#06066a">C</text>
<text class="c" x="550.3" y="581" fill="#06066a">C</text>
<text class="c" x="588.1" y="581" fill="#06066a">A</text>
<text class="c" x="625.8" y="581" fill="#06066a">G</text>
<text class="c" x="663.6" y="581" fill="#06066a">C</text>
<text class="c" x="701.3" y="581" fill="#06066a">C</text>
<text class="c" x="739.1" y="581" fill="#06066a">T</text>
<text class="c" x="776.9" y="581" fill="#8c8cb8">G</text>
<text class="c" x="814.6" y="581" fill="#06066a">G</text>
<text class="c" x="852.4" y="581" fill="#06066a">C</text>
<text class="c" x="890.2" y="581" fill="#06066a">C</text>
<text class="c" x="927.9" y="581" fill="#06066a">A</text>
<text class="r" x="152" y="596" fill="#005c00">Mouse</text>
<text class="c" x="172.7" y="597" fill="#7474ac">=</text>
<text class="c" x="210.4" y="597" fill="#7474ac">=</text>
<text class="c" x="248.2" y="597" fill="#7474ac">=</text>
<text class="c" x="286.0" y="597" fill="#7474ac">=</text>
<text class="c" x="323.7" y="597" fill="#7474ac">=</text>
<text class="c" x="361.5" y="597" fill="#7474ac">=</text>
<text class="c" x="399.3" y="597" fill="#7474ac">=</text>
<text class="c" x="437.0" y="597" fill="#7474ac">=</text>
<text class="c" x="474.8" y="597" fill="#7474ac">=</text>
<text class="c" x="512.5" y="597" fill="#7474ac">=</text>
<text class="c" x="550.3" y="597" fill="#7474ac">=</text>
<text class="c" x="588.1" y="597" fill="#7474ac">=</text>
<text class="c" x="625.8" y="597" fill="#7474ac">=</text>
<text class="c" x="663.6" y="597" fill="#7474ac">=</text>
<text class="c" x="701.3" y="597" fill="#7474ac">=</text>
<text class="c" x="739.1" y="597" fill="#7474ac">=</text>
<text class="c" x="776.9" y="597" fill="#7474ac">=</text>
<text class="c" x="814.6" y="597" fill="#7474ac">=</text>
<text class="c" x="852.4" y="597" fill="#7474ac">=</text>
<text class="c" x="890.2" y="597" fill="#7474ac">=</text>
<text class="c" x="927.9" y="597" fill="#7474ac">=</text>
<text class="r" x="152" y="611" fill="#06066a">Dog</text>
<text class="c" x="172.7" y="612" fill="#7474ac">=</text>
<text class="c" x="210.4" y="612" fill="#7474ac">=</text>
<text class="c" x="248.2" y="612" fill="#7474ac">=</text>
<text class="c" x="286.0" y="612" fill="#7474ac">=</text>
<text class="c" x="323.7" y="612" fill="#7474ac">=</text>
<text class="c" x="361.5" y="612" fill="#7474ac">=</text>
<text class="c" x="399.3" y="612" fill="#7474ac">=</text>
<text class="c" x="437.0" y="612" fill="#7474ac">=</text>
<text class="c" x="474.8" y="612" fill="#7474ac">=</text>
<text class="c" x="512.5" y="612" fill="#7474ac">=</text>
<text class="c" x="550.3" y="612" fill="#7474ac">=</text>
<text class="c" x="588.1" y="612" fill="#7474ac">=</text>
<text class="c" x="625.8" y="612" fill="#7474ac">=</text>
<text class="c" x="663.6" y="612" fill="#7474ac">=</text>
<text class="c" x="701.3" y="612" fill="#7474ac">=</text>
<text class="c" x="739.1" y="612" fill="#7474ac">=</text>
<text class="c" x="776.9" y="612" fill="#7474ac">=</text>
<text class="c" x="814.6" y="612" fill="#7474ac">=</text>
<text class="c" x="852.4" y="612" fill="#7474ac">=</text>
<text class="c" x="890.2" y="612" fill="#7474ac">=</text>
<text class="c" x="927.9" y="612" fill="#7474ac">=</text>
<text class="r" x="152" y="626" fill="#005c00">Elephant</text>
<text class="c" x="172.7" y="627" fill="#7474ac">=</text>
<text class="c" x="210.4" y="627" fill="#7474ac">=</text>
<text class="c" x="248.2" y="627" fill="#7474ac">=</text>
<text class="c" x="286.0" y="627" fill="#7474ac">=</text>
<text class="c" x="323.7" y="627" fill="#7474ac">=</text>
<text class="c" x="361.5" y="627" fill="#7474ac">=</text>
<text class="c" x="399.3" y="627" fill="#7474ac">=</text>
<text class="c" x="437.0" y="627" fill="#7474ac">=</text>
<text class="c" x="474.8" y="627" fill="#7474ac">=</text>
<text class="c" x="512.5" y="627" fill="#7474ac">=</text>
<text class="c" x="550.3" y="627" fill="#7474ac">=</text>
<text class="c" x="588.1" y="627" fill="#7474ac">=</text>
<text class="c" x="625.8" y="627" fill="#7474ac">=</text>
<text class="c" x="663.6" y="627" fill="#7474ac">=</text>
<text class="c" x="701.3" y="627" fill="#7474ac">=</text>
<text class="c" x="739.1" y="627" fill="#7474ac">=</text>
<text class="c" x="776.9" y="627" fill="#7474ac">=</text>
<text class="c" x="814.6" y="627" fill="#7474ac">=</text>
<text class="c" x="852.4" y="627" fill="#7474ac">=</text>
<text class="c" x="890.2" y="627" fill="#7474ac">=</text>
<text class="c" x="927.9" y="627" fill="#7474ac">=</text>
<text class="r" x="152" y="641" fill="#005c00">Chicken</text>
<text class="c" x="172.7" y="642" fill="#7474ac">=</text>
<text class="c" x="210.4" y="642" fill="#7474ac">=</text>
<text class="c" x="248.2" y="642" fill="#7474ac">=</text>
<text class="c" x="286.0" y="642" fill="#7474ac">=</text>
<text class="c" x="323.7" y="642" fill="#7474ac">=</text>
<text class="c" x="361.5" y="642" fill="#7474ac">=</text>
<text class="c" x="399.3" y="642" fill="#7474ac">=</text>
<text class="c" x="437.0" y="642" fill="#7474ac">=</text>
<text class="c" x="474.8" y="642" fill="#7474ac">=</text>
<text class="c" x="512.5" y="642" fill="#7474ac">=</text>
<text class="c" x="550.3" y="642" fill="#7474ac">=</text>
<text class="c" x="588.1" y="642" fill="#7474ac">=</text>
<text class="c" x="625.8" y="642" fill="#7474ac">=</text>
<text class="c" x="663.6" y="642" fill="#7474ac">=</text>
<text class="c" x="701.3" y="642" fill="#7474ac">=</text>
<text class="c" x="739.1" y="642" fill="#7474ac">=</text>
<text class="c" x="776.9" y="642" fill="#7474ac">=</text>
<text class="c" x="814.6" y="642" fill="#7474ac">=</text>
<text class="c" x="852.4" y="642" fill="#7474ac">=</text>
<text class="c" x="890.2" y="642" fill="#7474ac">=</text>
<text class="c" x="927.9" y="642" fill="#7474ac">=</text>
<text class="r" x="152" y="656" fill="#06066a">X_tropicalis</text>
<text class="c" x="172.7" y="657" fill="#7474ac">=</text>
<text class="c" x="210.4" y="657" fill="#7474ac">=</text>
<text class="c" x="248.2" y="657" fill="#7474ac">=</text>
<text class="c" x="286.0" y="657" fill="#7474ac">=</text>
<text class="c" x="323.7" y="657" fill="#7474ac">=</text>
<text class="c" x="361.5" y="657" fill="#7474ac">=</text>
<text class="c" x="399.3" y="657" fill="#7474ac">=</text>
<text class="c" x="437.0" y="657" fill="#7474ac">=</text>
<text class="c" x="474.8" y="657" fill="#7474ac">=</text>
<text class="c" x="512.5" y="657" fill="#7474ac">=</text>
<text class="c" x="550.3" y="657" fill="#7474ac">=</text>
<text class="c" x="588.1" y="657" fill="#7474ac">=</text>
<text class="c" x="625.8" y="657" fill="#7474ac">=</text>
<text class="c" x="663.6" y="657" fill="#7474ac">=</text>
<text class="c" x="701.3" y="657" fill="#7474ac">=</text>
<text class="c" x="739.1" y="657" fill="#7474ac">=</text>
<text class="c" x="776.9" y="657" fill="#7474ac">=</text>
<text class="c" x="814.6" y="657" fill="#7474ac">=</text>
<text class="c" x="852.4" y="657" fill="#7474ac">=</text>
<text class="c" x="890.2" y="657" fill="#7474ac">=</text>
<text class="c" x="927.9" y="657" fill="#7474ac">=</text>
<text class="r" x="152" y="671" fill="#005c00">Zebrafish</text>
<text x="440.83" y="687" textLength="223.08" lengthAdjust="spacing">Repeating Elements by RepeatMasker</text>
<text class="r" x="152" y="701">RepeatMasker</text>
<rect class="g" x="156" y="689" width="793" height="15" fill="#000"/>
</svg></body></html>
